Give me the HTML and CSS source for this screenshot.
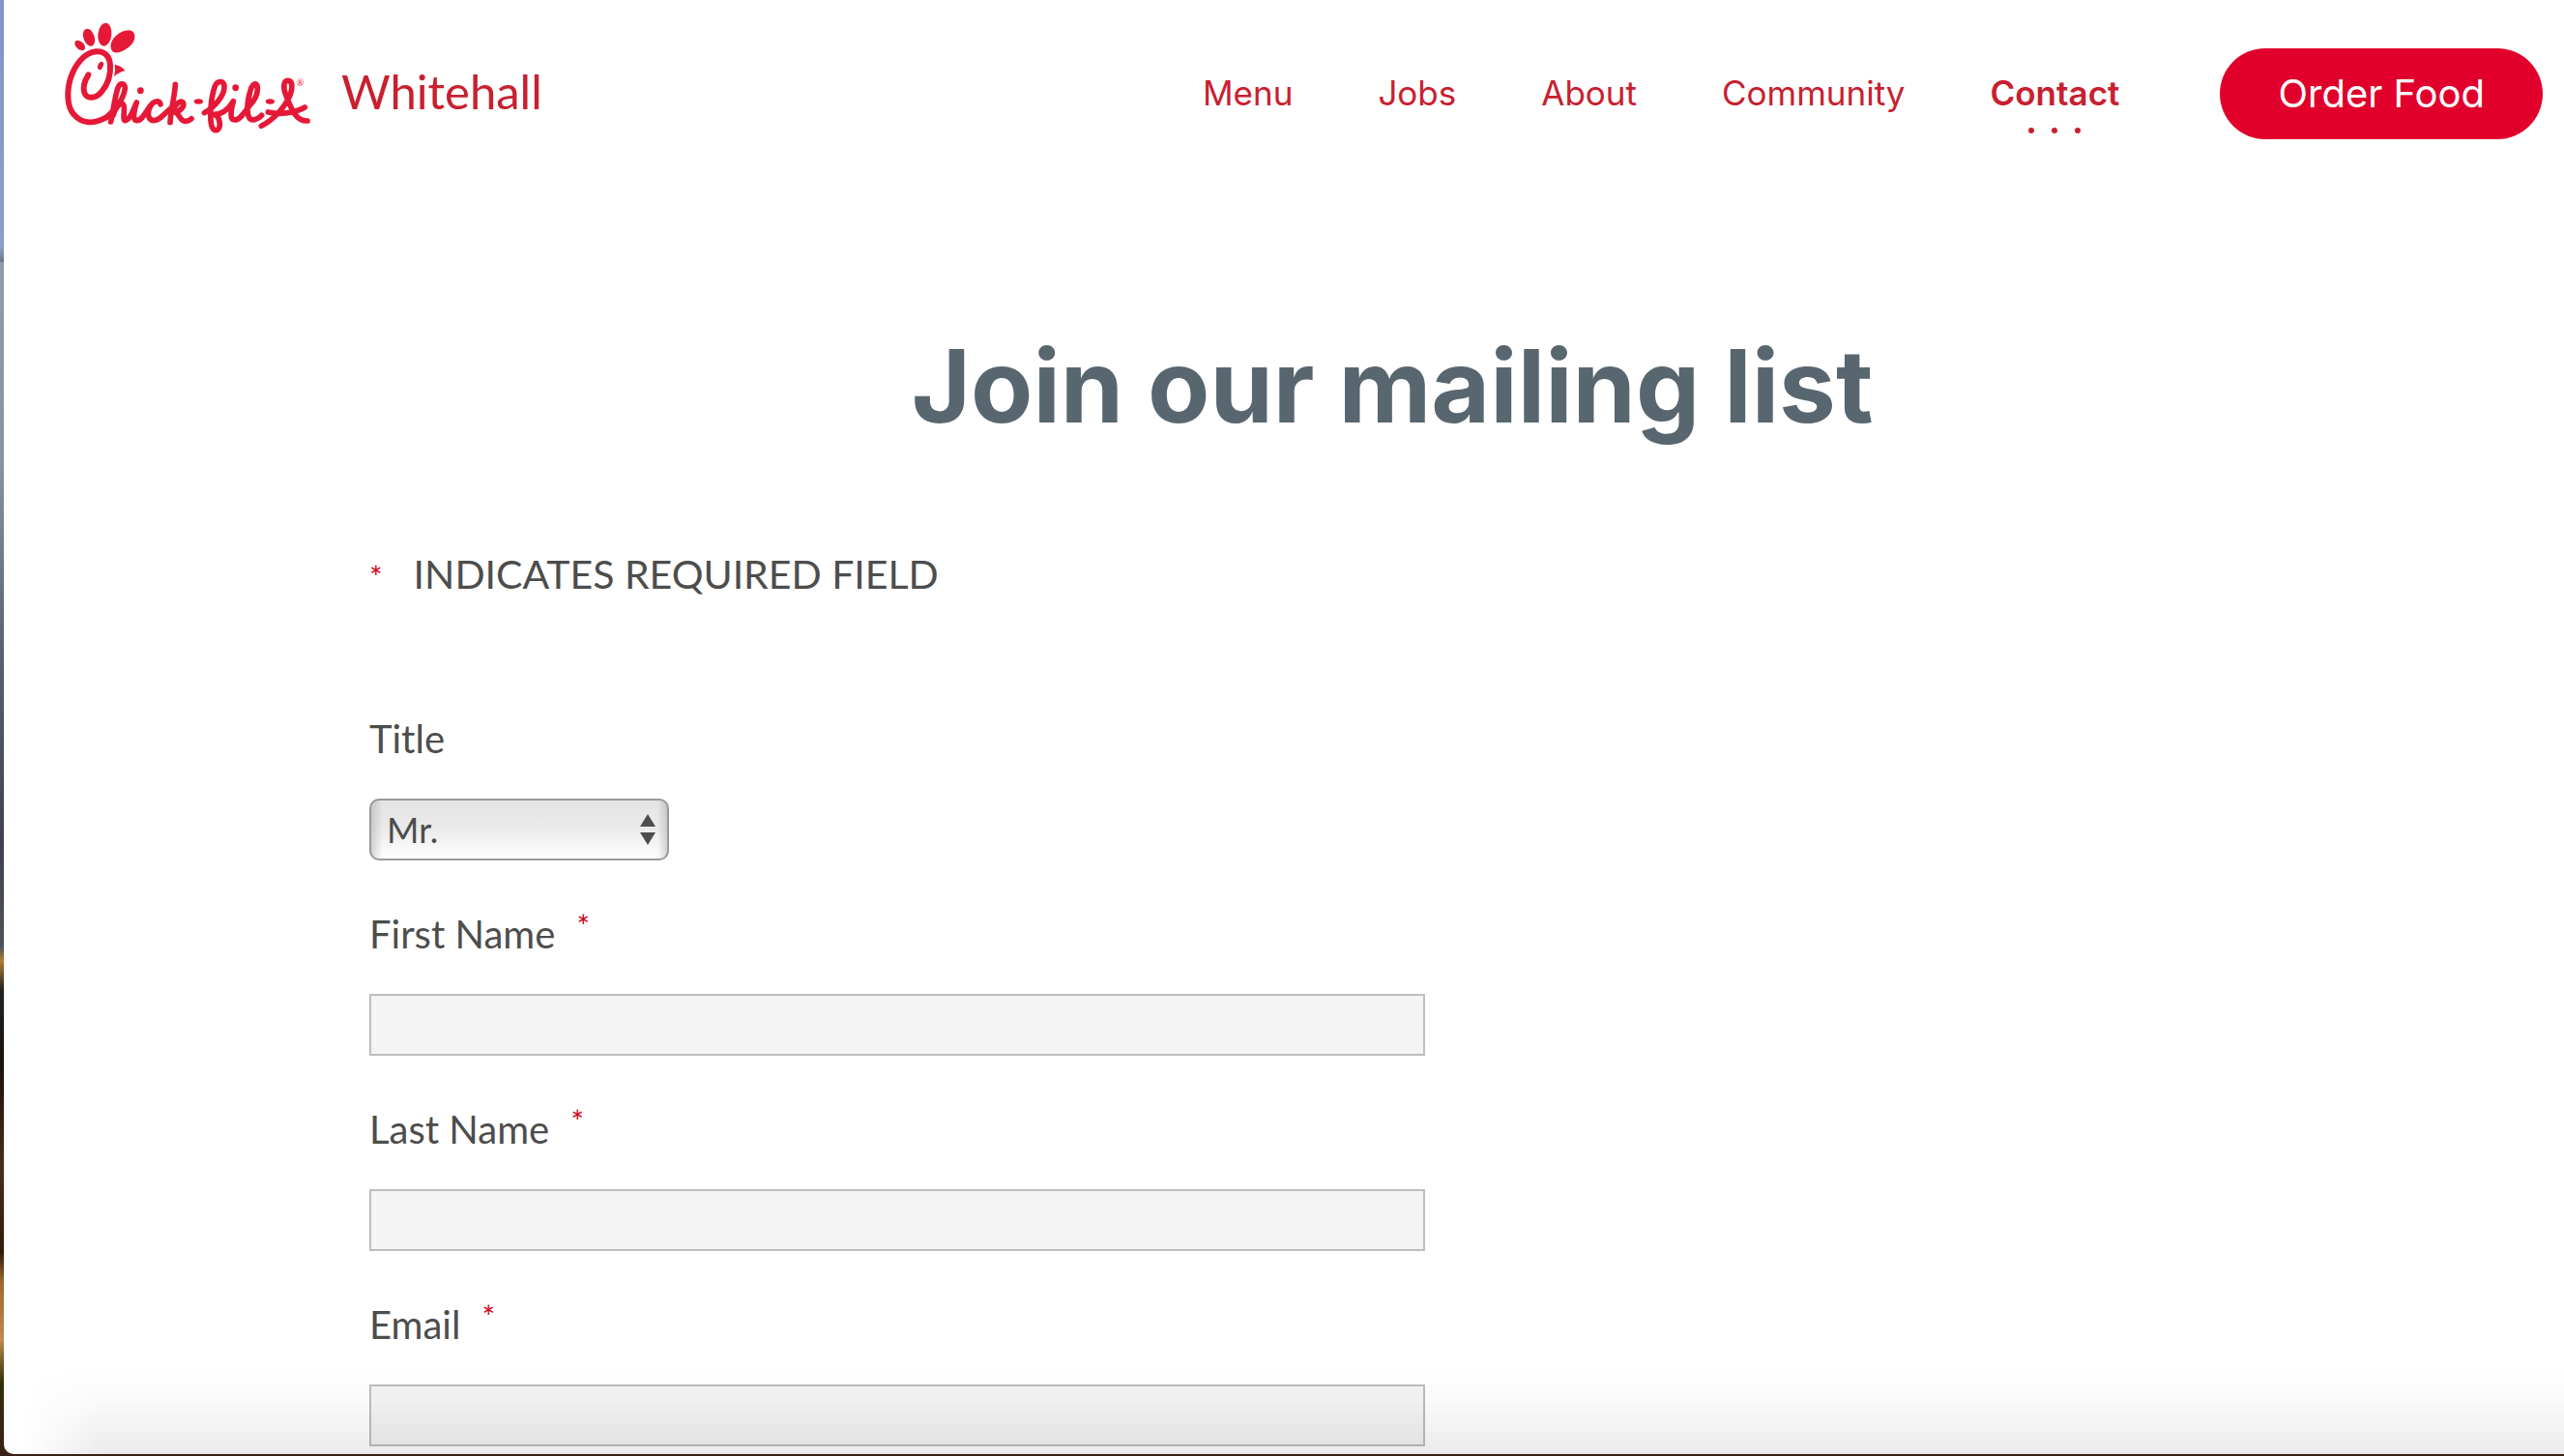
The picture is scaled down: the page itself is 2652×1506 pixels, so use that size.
FILE: index.html
```html
<!DOCTYPE html>
<html lang="en">
<head>
    <meta charset="UTF-8">
    <title>Chick-fil-A Whitehall - Contact</title>
    <link rel="stylesheet" href="styles.css">
</head>
<body>
    <div class="window">
        <header class="header">
            <a class="brand" href="#">
                <svg class="logo" viewBox="0 0 870 420" role="img" aria-label="Chick-fil-A">
                    <!-- comb -->
                    <g fill="#e51937">
                        <ellipse cx="98" cy="111" rx="19" ry="12" transform="rotate(42 98 111)"/>
                        <ellipse cx="126" cy="86" rx="17" ry="28" transform="rotate(-20 126 86)"/>
                        <ellipse cx="175" cy="77" rx="21" ry="36" transform="rotate(6 175 77)"/>
                        <path d="M194 118C190 92 222 65 248 64C270 64 275 88 259 107C240 128 198 148 194 118z"/>
                        <ellipse cx="162" cy="174" rx="8" ry="13" transform="rotate(25 162 174)"/>
                        <path d="M206 170Q228 174 238 190Q218 194 204 208Q209 188 206 170z"/>
                        <circle cx="286" cy="251" r="10"/>
                        <circle cx="581" cy="242" r="10"/>
                        <ellipse cx="466" cy="285" rx="14" ry="8"/>
                        <ellipse cx="688" cy="285" rx="14" ry="8"/>
                    </g>
                    <!-- script -->
                    <g fill="none" stroke="#e51937" stroke-width="17" stroke-linecap="round" stroke-linejoin="round">
                        <path stroke-width="18" d="M124 202C112 222 106 240 112 258C120 278 146 278 166 254C184 232 194 204 192 172C190 142 172 127 148 130C112 134 84 168 69 212C56 256 58 302 80 326C104 354 140 356 180 334"/>
                        <path d="M180 334C212 308 236 272 238 242C238 228 222 226 216 242C206 272 202 310 194 348"/>
                        <path d="M201 328C208 304 220 290 230 292C242 298 228 342 238 344C252 344 264 312 274 288C266 314 260 342 274 344C290 344 300 322 314 302"/>
                        <path d="M348 294C346 280 326 282 316 300C304 326 312 344 328 344C348 344 362 318 386 302"/>
                        <path d="M394 232C392 270 380 310 378 350"/>
                        <path d="M384 316C394 292 410 280 418 288C424 302 408 316 390 318C406 318 408 346 424 346C432 346 438 344 444 338"/>
                        <path d="M484 320C516 304 546 266 546 240C546 218 524 218 516 240C504 276 500 332 506 358C510 380 532 380 532 356C532 336 522 324 510 326C538 326 560 308 574 284C566 314 562 342 578 342C596 342 608 318 622 300"/>
                        <path d="M622 300C642 280 652 256 648 236C642 222 630 236 626 254C614 296 614 340 634 342C646 342 654 336 662 328"/>
                        <path d="M661 361C698 342 732 306 750 266C760 236 756 220 743 220C730 220 728 240 736 262C752 304 766 346 804 345"/>
                        <path d="M682 318C716 326 762 322 796 303"/>
                    </g>
                    <text class="reg" x="771" y="237">®</text>
                </svg>
                <span class="location">Whitehall</span>
            </a>
            <nav class="nav">
                <a href="#">Menu</a>
                <a href="#">Jobs</a>
                <a href="#">About</a>
                <a href="#">Community</a>
                <a class="active" href="#">Contact</a>
            </nav>
            <a class="order" href="#">Order Food</a>
        </header>
        <main class="content">
            <h1>Join our mailing list</h1>
            <form class="form" action="#">
                <p class="note"><span class="star">*</span>INDICATES REQUIRED FIELD</p>
                <div class="field">
                    <label for="title">Title</label>
                    <select id="title">
                        <option>Mr.</option>
                        <option>Mrs.</option>
                        <option>Ms.</option>
                    </select>
                </div>
                <div class="field">
                    <label for="first">First Name <span class="star">*</span></label>
                    <input id="first" type="text">
                </div>
                <div class="field">
                    <label for="last">Last Name <span class="star">*</span></label>
                    <input id="last" type="text">
                </div>
                <div class="field">
                    <label for="email">Email <span class="star">*</span></label>
                    <input id="email" type="email">
                </div>
            </form>
        </main>
    </div>
</body>
</html>
```
FILE: styles.css
```css
*{ box-sizing: border-box; margin: 0; padding: 0;}
/* desktop behind the window */
body{
    height: 100vh;
    padding: 0 0 2px 4px;
    overflow: hidden;
    font-family: Lato, "Liberation Sans", sans-serif;
    color: #4d4d4d;
    background: linear-gradient(#8494c4 0, #8c9ccb 17%, #6c7784 18%, #8f9da5 18%, #8793a0 32%, #59606f 45%, #3e424d 58%, #4e535b 65%, #b07c34 66%, #22211f 68%, #1a120c 73%, #4a2c1a 80%, #33190c 86%, #9a6a2c 88%, #c08a50 92%, #2f3008 95%, #3a2116 99%);
}
a{ color: #c8202f; text-decoration: none;}
.window{
    position: relative;
    height: 100%;
    overflow: hidden;
    background: #fff;
    border-bottom-left-radius: 10px;
}
/* shade along the bottom edge */
.window::after{
    content: "";
    position: absolute;
    left: 0;
    right: 0;
    bottom: 0;
    height: 90px;
    background: linear-gradient(rgba(0,0,0,0), rgba(0,0,0,.02) 40%, rgba(0,0,0,.08));
    -webkit-mask-image: linear-gradient(to right, transparent 20px, #000 100px);
    mask-image: linear-gradient(to right, transparent 20px, #000 100px);
    pointer-events: none;
}
.header{
    display: flex;
    align-items: center;
    height: 194px;
    padding: 0 22px 0 46px;
}
.brand{
    display: flex;
    align-items: center;
    margin-right: auto;
}
.logo{
    display: block;
    width: 290px;
    height: 140px;
    margin-top: -34px;
}
.reg{
    font-size: 26px;
    fill: #e51937;
}
.location{
    margin-left: 13px;
    font-size: 49px;
    line-height: 60px;
    padding-bottom: 6px;
}
.nav{
    display: flex;
    gap: 88px;
    margin-right: 104px;
    padding-bottom: 2px;
    font-family: Inter, "Liberation Sans", sans-serif;
    font-size: 35px;
    line-height: 44px;
}
.nav .active{
    position: relative;
    font-weight: 600;
}
.nav .active::after{
    content: "";
    position: absolute;
    left: 50%;
    bottom: -20px;
    width: 6px;
    height: 6px;
    margin-left: -3px;
    border-radius: 50%;
    background: #c8202f;
    box-shadow: -24px 0 #c8202f, 24px 0 #c8202f;
}
.order{
    padding: 0 60px;
    font-family: Inter, "Liberation Sans", sans-serif;
    font-size: 40px;
    line-height: 94px;
    color: #fff;
    background: #e1002b;
    border-radius: 47px;
}
.content{ padding: 0 154px 0 378px;}
h1{
    margin-top: 140px;
    font-family: Inter, "Liberation Sans", sans-serif;
    font-size: 105px;
    line-height: 130px;
    text-align: center;
    color: #586670;
}
.note{
    margin: 102px 0 111px;
    font-size: 41px;
    line-height: 56px;
}
.star{
    font-size: 32px;
    color: #d0021b;
}
.note .star{ margin-right: 32px;}
.field{ margin-bottom: 48px;}
.field label{
    display: block;
    margin-bottom: 34px;
    font-size: 40px;
    line-height: 56px;
}
.field .star{
    margin-left: 12px;
    line-height: 40px;
    vertical-align: top;
}
.field input,
.field select{
    display: block;
    height: 64px;
    font-family: inherit;
    font-size: 36px;
    color: #4d4d4d;
}
.field input{
    width: 1092px;
    max-width: 100%;
    padding: 0 16px;
    background: #f4f4f4;
    border: 2px solid #bebebe;
    border-radius: 0;
}
.field select{
    width: 310px;
    padding: 0 16px;
    -webkit-appearance: none;
    appearance: none;
    border: 2px solid #999;
    border-radius: 10px;
    background:
        url("data:image/svg+xml,%3Csvg xmlns='http://www.w3.org/2000/svg' width='16' height='32'%3E%3Cpath fill='%234d4d4d' d='M8 0l8 13H0zM0 19h16L8 32z'/%3E%3C/svg%3E") no-repeat right 12px center,
        linear-gradient(to right, rgba(150,156,156,.4), rgba(150,156,156,0) 12px, rgba(150,156,156,0) 296px, rgba(150,156,156,.4)),
        linear-gradient(#e4e4e4, #ebebeb 50%, #fff);
}
```
